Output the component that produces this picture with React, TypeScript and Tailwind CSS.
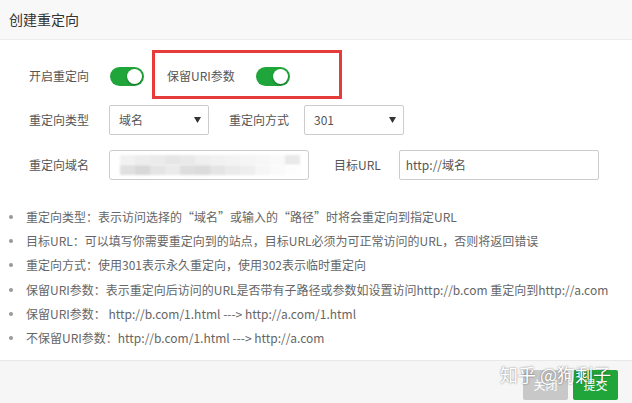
import React from "react";

const font = { fontFamily: '"Noto Sans CJK SC", "Noto Sans", sans-serif' };

function Toggle() {
  return (
    <div className="relative w-[34px] h-[19px] rounded-full bg-[#20a53a]">
      <div className="absolute right-[2px] top-[2px] w-[15px] h-[15px] rounded-full bg-white shadow-[0_1px_2px_rgba(0,0,0,0.35)]" />
    </div>
  );
}

function Select({ value }: { value: string }) {
  return (
    <div className="w-[100px] h-[30px] border border-[#cccccc] rounded-[2px] flex items-center justify-between pl-[9px] pr-[7px] text-[12px] text-[#555]">
      <span>{value}</span>
      <svg width="7" height="6" viewBox="0 0 7 6">
        <path d="M0 0 L7 0 L3.5 6 Z" fill="#333" />
      </svg>
    </div>
  );
}

const topBlocks = ["#f1f1f1", "#ededed", "#ebebeb", "#e6e6e6", "#e9e9e9", "#efefef", "#f1f1f1", "#f3f3f3", "#f5f5f5", "#f7f7f7", "#f9f9f9", "#e9e9e9"];
const botBlocks = ["#e0e0e0", "#d8d8d8", "#e4e4e4", "#eaeaea", "#dedede", "#dbdbdb", "#e4e4e4", "#eaeaea", "#eeeeee", "#f6f6f6", "#fafafa", "#fdfdfd"];

function Mosaic() {
  return (
    <div className="w-[200px] h-[30px] border border-[#cccccc] rounded-[3px] flex flex-col justify-center pl-[10px] overflow-hidden">
      <div className="flex blur-[0.8px]">
        {topBlocks.map((c, i) => (
          <div key={i} className="w-[15px] h-[10px]" style={{ background: c }} />
        ))}
      </div>
      <div className="flex blur-[0.8px]">
        {botBlocks.map((c, i) => (
          <div key={i} className="w-[15px] h-[10px]" style={{ background: c }} />
        ))}
      </div>
    </div>
  );
}

const notes = [
  "重定向类型：表示访问选择的“域名”或输入的“路径”时将会重定向到指定URL",
  "目标URL：可以填写你需要重定向到的站点，目标URL必须为可正常访问的URL，否则将返回错误",
  "重定向方式：使用301表示永久重定向，使用302表示临时重定向",
  "保留URI参数：表示重定向后访问的URL是否带有子路径或参数如设置访问http://b.com 重定向到http://a.com",
  "保留URI参数： http://b.com/1.html ---> http://a.com/1.html",
  "不保留URI参数：http://b.com/1.html ---> http://a.com",
];

export default function App() {
  return (
    <div className="relative w-[632px] h-[403px] bg-white overflow-hidden flex flex-col" style={font}>
      <div className="h-[40px] shrink-0 bg-[#f8f8f8] border-b border-[#ececec] pl-[9px] flex items-center text-[14px] text-[#333]">
        创建重定向
      </div>

      <div className="flex-1 flex flex-col pt-[21px]">
        <div className="flex items-center h-[30px] text-[12px] text-[#555]">
          <div className="w-[89px] text-right">开启重定向</div>
          <div className="ml-[21px]"><Toggle /></div>
          <div className="ml-[23px]">保留URI参数</div>
          <div className="ml-[21px]"><Toggle /></div>
        </div>

        <div className="flex items-center h-[30px] mt-[14px] text-[12px] text-[#555]">
          <div className="w-[89px] text-right">重定向类型</div>
          <div className="ml-[20px]"><Select value="域名" /></div>
          <div className="ml-[20px]">重定向方式</div>
          <div className="ml-[15px]"><Select value="301" /></div>
        </div>

        <div className="flex items-center h-[30px] mt-[15px] text-[12px] text-[#555]">
          <div className="w-[89px] text-right">重定向域名</div>
          <div className="ml-[20px]"><Mosaic /></div>
          <div className="ml-[25px]">目标URL</div>
          <div className="ml-[18px] w-[200px] h-[30px] border border-[#cccccc] rounded-[2px] flex items-center pl-[6px] text-[#555]">
            http://域名
          </div>
        </div>

        <ul className="mt-[25px] flex flex-col text-[12px] text-[#666]">
          {notes.map((n, i) => (
            <li key={i} className="h-[24.2px] flex items-center whitespace-nowrap">
              <span className="w-[4px] h-[4px] rounded-full bg-[#999] ml-[9px] mr-[13px] shrink-0" />
              {n}
            </li>
          ))}
        </ul>
      </div>

      <div className="h-[43px] shrink-0 bg-[#f6f6f6] border-t border-[#e8e8e8] flex justify-end items-start pt-[9px] pr-[14px] gap-[5px]">
        <button className="w-[45px] h-[30px] rounded-[2px] bg-[#c8c8c8] text-white text-[12px]">关闭</button>
        <button className="w-[45px] h-[30px] rounded-[2px] bg-[#20a53a] text-white text-[12px]">提交</button>
      </div>

      <div className="absolute left-[152px] top-[50px] w-[190px] h-[49px] border-[3px] border-[#e53b3b] pointer-events-none" />

      <div className="absolute left-[500px] top-[361px] text-[18px] text-white whitespace-nowrap [text-shadow:0_0_2px_rgba(0,0,0,0.55)]">
        知乎 @狗剩子
      </div>
    </div>
  );
}
